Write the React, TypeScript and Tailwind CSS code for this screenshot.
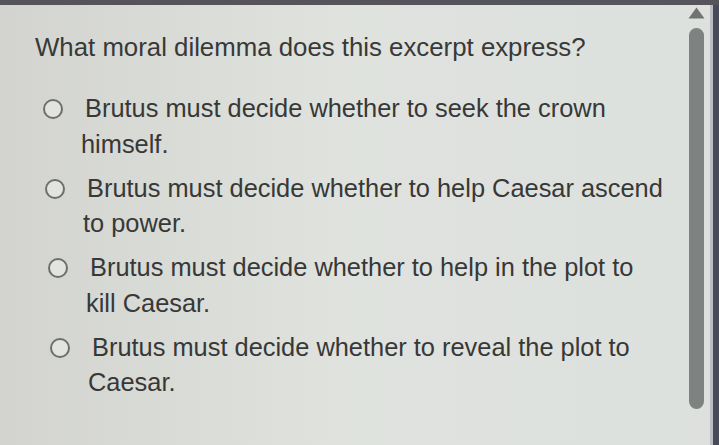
import React from "react";

type Choice = { lines: [string, string]; indent: string };

const choices: Choice[] = [
  { lines: ["Brutus must decide whether to seek the crown", "himself."], indent: "ml-0" },
  { lines: ["Brutus must decide whether to help Caesar ascend", "to power."], indent: "ml-[2px]" },
  { lines: ["Brutus must decide whether to help in the plot to", "kill Caesar."], indent: "ml-[5px]" },
  { lines: ["Brutus must decide whether to reveal the plot to", "Caesar."], indent: "ml-[7px]" },
];

function Radio() {
  return (
    <span className="mt-[8px] h-[20px] w-[20px] shrink-0 rounded-full border-2 border-[#6e6f6d] bg-[#e2e4e0]" />
  );
}

export default function App() {
  return (
    <div
      className="flex h-[445px] w-[719px] flex-col overflow-hidden bg-[#dadcd8]"
      style={{ fontFamily: '"Liberation Sans", Arial, sans-serif' }}
    >
      <div className="h-[5px] w-full shrink-0 bg-[#56545a]" />
      <div className="flex min-h-0 flex-1">
        <div className="flex-1 bg-gradient-to-r from-[#d3d4d0] via-[#dfe2dd] to-[#dde1de] pl-[35px] pt-[26px]">
          <h1 className="text-[25.8px] leading-[32px] text-[#383938]">
            What moral dilemma does this excerpt express?
          </h1>
          <ul className="mt-[28px] flex flex-col gap-[8px] pl-[8px]">
            {choices.map((c, i) => (
              <li key={i} className={`flex gap-[18px] ${c.indent}`}>
                <Radio />
                <p className="whitespace-nowrap text-[25.4px] leading-[35.75px] text-[#373837]">
                  <span className="pl-[4px]">{c.lines[0]}</span>
                  <br />
                  {c.lines[1]}
                </p>
              </li>
            ))}
          </ul>
        </div>
        <div className="flex w-[29px] shrink-0 flex-col items-center bg-[#dde0dd] pt-[2px] pl-[1px]">
          <svg width="17" height="12" viewBox="0 0 17 12" className="shrink-0">
            <path d="M8.5 0.5 L16.5 11.5 L0.5 11.5 Z" fill="#6f7372" />
          </svg>
          <div className="mt-[9px] h-[381px] w-[15px] rounded-full bg-[#7e8281]" />
        </div>
        <div className="w-[3px] shrink-0 bg-[#b9bcc0]" />
        <div className="w-[6px] shrink-0 bg-[#474a58]" />
      </div>
    </div>
  );
}
